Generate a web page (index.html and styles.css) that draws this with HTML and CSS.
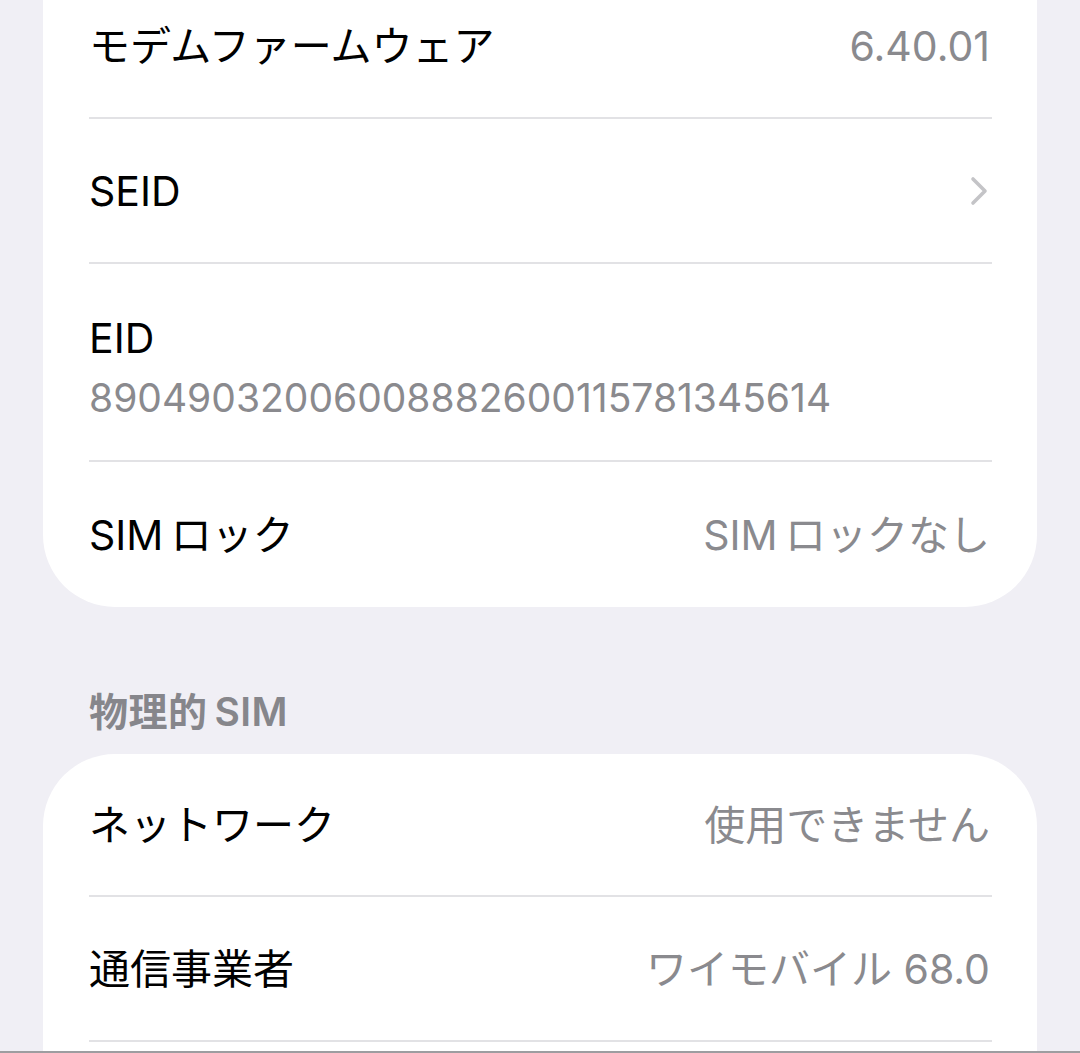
FILE: index.html
```html
<!DOCTYPE html>
<html lang="ja">
<head>
    <meta charset="UTF-8">
    <meta name="viewport" content="width=device-width, initial-scale=1.0">
    <title>情報</title>
    <link rel="stylesheet" href="styles.css">
</head>
<body>
    <div class="screen">
        <div class="card card-first">
            <div class="row row-top">
                <div class="row-inner">
                    <span class="label">モデムファームウェア</span>
                    <span class="value">6.40.01</span>
                </div>
            </div>
            <div class="row">
                <div class="row-inner">
                    <span class="label">SEID</span>
                    <svg class="chevron" width="18" height="30" viewBox="0 0 18 30">
                        <path d="M3 3 L15 15 L3 27" fill="none" stroke="#c4c4c7" stroke-width="3.6" stroke-linecap="round" stroke-linejoin="round"/>
                    </svg>
                </div>
            </div>
            <div class="row">
                <div class="row-inner row-stack">
                    <span class="label">EID</span>
                    <span class="sub">89049032006008882600115781345614</span>
                </div>
            </div>
            <div class="row">
                <div class="row-inner">
                    <span class="label">SIM&#8201;ロック</span>
                    <span class="value">SIM&#8201;ロックなし</span>
                </div>
            </div>
        </div>

        <div class="section-title">物理的&#8201;SIM</div>

        <div class="card">
            <div class="row row-short">
                <div class="row-inner">
                    <span class="label">ネットワーク</span>
                    <span class="value">使用できません</span>
                </div>
            </div>
            <div class="row">
                <div class="row-inner">
                    <span class="label">通信事業者</span>
                    <span class="value">ワイモバイル 68.0</span>
                </div>
            </div>
            <div class="row">
                <div class="row-inner"></div>
            </div>
        </div>
    </div>
</body>
</html>
```

FILE: styles.css
```css
html, body {
    margin: 0;
    padding: 0;
}
body {
    background-color: #f0eff5;
    font-family: Inter, "Noto Sans CJK JP", sans-serif;
    color: #000;
}
.screen {
    height: 1053px;
    overflow: hidden;
    box-sizing: border-box;
    border-bottom: 2px solid #9d9da0;
}
.card {
    background-color: #fff;
    margin: 0 43px;
    border-radius: 72px;
    padding-left: 46px;
}
.card-first {
    margin-top: -100px;
}
.row-inner {
    display: flex;
    align-items: center;
    justify-content: space-between;
    height: 145px;
    box-sizing: border-box;
    margin-right: 45px;
    padding-right: 2px;
    border-bottom: 2px solid #e2e2e5;
}
.card > .row:last-child .row-inner {
    border-bottom: none;
}
.row-top .row-inner {
    height: 219px;
    padding-top: 74px;
}
.row-short .row-inner {
    height: 143px;
}
.row-stack {
    flex-direction: column;
    align-items: flex-start;
    justify-content: flex-start;
    height: 198px;
    padding-top: 50px;
}
.label {
    font-size: 41px;
    line-height: 48px;
}
.value {
    font-size: 41px;
    line-height: 48px;
    color: #8a8a8e;
}
.sub {
    font-size: 39px;
    line-height: 48px;
    margin-top: 12px;
    color: #8a8a8e;
}
.chevron {
    display: block;
    margin-right: 2px;
}
.section-title {
    height: 147px;
    box-sizing: border-box;
    display: flex;
    align-items: flex-end;
    padding: 0 0 22px 89px;
    font-size: 39px;
    line-height: 40px;
    font-weight: 600;
    letter-spacing: 0.5px;
    color: #86868b;
}
```
